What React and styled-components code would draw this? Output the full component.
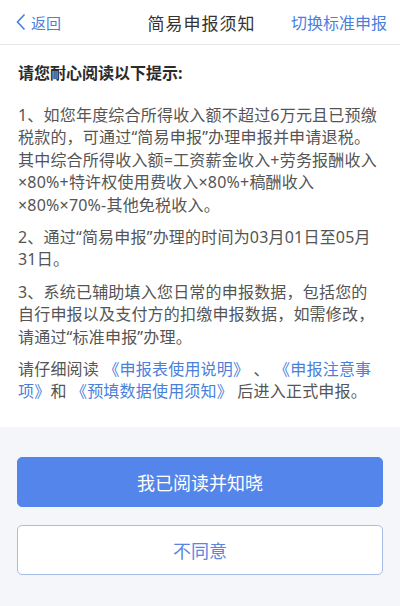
import React from 'react'
import styled, { createGlobalStyle } from 'styled-components'

const GlobalStyle = createGlobalStyle`
  html, body {
    margin: 0;
    padding: 0;
    background: #f4f6fa;
  }
  body {
    font-family: "Noto Sans", "Noto Sans CJK SC", sans-serif;
  }
`;

const Page = styled.div`
  width: 400px;
  min-height: 606px;
  background: #f4f6fa;
  display: flex;
  flex-direction: column;
`;

const Header = styled.div`
  height: 44px;
  background: #fff;
  border-bottom: 1px solid #e6e6e6;
  display: grid;
  grid-template-columns: 1fr auto 1fr;
  align-items: center;
  padding: 0 13px 0 16px;
`;

const Back = styled.div`
  display: flex;
  align-items: center;
  gap: 5px;
  color: #4b7fdc;
  font-size: 15px;
`;

const Title = styled.div`
  font-size: 17px;
  color: #333;
  letter-spacing: 1px;
`;

const Switch = styled.div`
  justify-self: end;
  color: #4b7fdc;
  font-size: 16px;
`;

const Content = styled.div`
  background: #fff;
  padding: 16px 18px 14px;
`;

const Heading = styled.div`
  font-size: 16px;
  font-weight: bold;
  color: #2b2b2b;
  line-height: 24px;
  margin-bottom: 19px;
`;

const Para = styled.p`
  margin: 0 0 10px;
  font-size: 16px;
  line-height: 22.4px;
  color: #555;
  letter-spacing: 0.2px;
  white-space: nowrap;
`;

const Link = styled.span`
  color: #4b7fdc;
`;

const Actions = styled.div`
  padding: 30px 17px 0;
  display: flex;
  flex-direction: column;
  gap: 18px;
`;

const Button = styled.button`
  height: 50px;
  border-radius: 5px;
  font-family: inherit;
  font-size: 18px;
  border: 1px solid ${p => (p.primary ? '#5385eb' : '#a6bde8')};
  background: ${p => (p.primary ? '#5385eb' : '#fff')};
  color: ${p => (p.primary ? '#fff' : '#5a86e0')};
`;

export default function App() {
  return (
    <Page>
      <GlobalStyle />
      <Header>
        <Back>
          <svg width="10" height="18" viewBox="0 0 10 18">
            <polyline points="8.5,1.5 1.5,9 8.5,16.5" fill="none" stroke="#4b7fdc" strokeWidth="1.6" />
          </svg>
          返回
        </Back>
        <Title>简易申报须知</Title>
        <Switch>切换标准申报</Switch>
      </Header>
      <Content>
        <Heading>请您耐心阅读以下提示:</Heading>
        <Para>
          1、如您年度综合所得收入额不超过6万元且已预缴<br />
          税款的，可通过“简易申报”办理申报并申请退税。<br />
          其中综合所得收入额=工资薪金收入+劳务报酬收入<br />
          ×80%+特许权使用费收入×80%+稿酬收入<br />
          ×80%×70%-其他免税收入。
        </Para>
        <Para>
          2、通过“简易申报”办理的时间为03月01日至05月<br />
          31日。
        </Para>
        <Para>
          3、系统已辅助填入您日常的申报数据，包括您的<br />
          自行申报以及支付方的扣缴申报数据，如需修改，<br />
          请通过“标准申报”办理。
        </Para>
        <Para>
          请仔细阅读 <Link>《申报表使用说明》</Link> 、 <Link>《申报注意事</Link><br />
          <Link>项》</Link>和 <Link>《预填数据使用须知》</Link> 后进入正式申报。
        </Para>
      </Content>
      <Actions>
        <Button primary>我已阅读并知晓</Button>
        <Button>不同意</Button>
      </Actions>
    </Page>
  )
}
